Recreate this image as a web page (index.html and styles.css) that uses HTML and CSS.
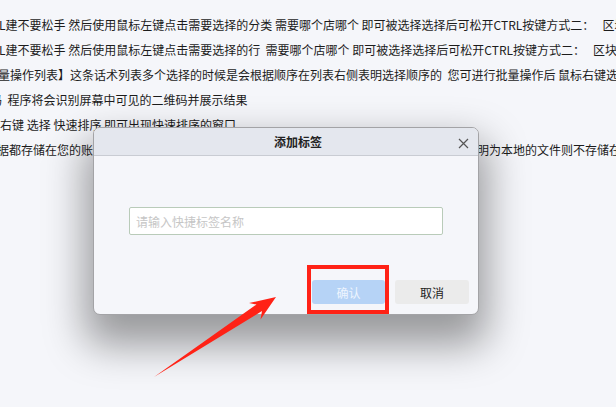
FILE: index.html
```html
<!DOCTYPE html>
<html>

<head>
  <title>添加标签</title>
  <meta charset="utf-8" />
  <link rel="stylesheet" href="styles.css">
</head>

<body>
  <!-- page text behind the dialog -->
  <div class="page">
    <div class="line l1">L建不要松手 然后使用鼠标左键点击需要选择的分类 需要哪个店哪个 即可被选择选择后可松开CTRL按键方式二：&nbsp;&nbsp; 区域选择</div>
    <div class="line l2">L建不要松手 然后使用鼠标左键点击需要选择的行&nbsp; 需要哪个店哪个 即可被选择选择后可松开CTRL按键方式二：&nbsp;&nbsp; 区块选择</div>
    <div class="line l3">量操作列表】这条话术列表多个选择的时候是会根据顺序在列表右侧表明选择顺序的&nbsp; 您可进行批量操作后 鼠标右键选择</div>
    <div class="line l4">码&nbsp;&nbsp;程序将会识别屏幕中可见的二维码并展示结果</div>
    <div class="line l5">右键 选择 快速排序 即可出现快速排序的窗口</div>
    <div class="line l6">据都存储在您的账户中，登录后可在任意设备上同步使用，若话术分组名称后面有标注的标明为本地的文件则不存储在云端</div>
  </div>

  <!-- dialog -->
  <div class="dialog">
    <div class="dialog-head">
      <span class="dialog-title">添加标签</span>
      <svg class="dialog-close" width="11" height="11" viewBox="0 0 11 11">
        <path d="M1 1 L10 10 M10 1 L1 10" stroke="#555" stroke-width="1.2" fill="none" />
      </svg>
    </div>
    <div class="dialog-body">
      <input class="tag-input" type="text" placeholder="请输入快捷标签名称">
    </div>
    <div class="dialog-foot">
      <button class="btn btn-ok">确认</button>
      <button class="btn btn-cancel">取消</button>
    </div>
  </div>

  <!-- annotation -->
  <div class="mark"></div>
  <svg class="arrow" width="616" height="407" viewBox="0 0 616 407">
    <polygon points="154,377 262,311 260.5,319.5 276,297 249,303 256.5,304.5" fill="#ff2216" />
  </svg>
</body>
</html>
```

FILE: styles.css
```css
* {
  margin: 0px;
  padding: 0px;
  box-sizing: border-box;
}

body {
  width: 616px;
  height: 407px;
  overflow: hidden;
  position: relative;
  background: #f5f6fa;
  font-family: "Noto Sans CJK SC", "Microsoft YaHei", sans-serif;
  font-size: 12px;
  color: #1c1c1c;
}

.page {
  padding-top: 12px;
}

.line {
  height: 25px;
  line-height: 25px;
  white-space: nowrap;
}

.l1,
.l2 { margin-left: -1px; }
.l3 { margin-left: -2px; }
.l4 { margin-left: -10px; }
.l6 { margin-left: -3px; }

/* dialog */
.dialog {
  position: absolute;
  left: 93px;
  top: 127px;
  width: 386px;
  height: 188px;
  border: 1px solid #a3a3a6;
  border-radius: 7px;
  background: #f5f6fa;
  overflow: hidden;
  box-shadow: 0 22px 40px 8px rgba(0, 0, 0, 0.38);
}

.dialog-head {
  height: 28px;
  background: #e4e7ee;
  border-bottom: 1px solid #c9ccd3;
  display: flex;
  align-items: center;
  justify-content: center;
  padding-left: 24px;
  position: relative;
}

.dialog-title {
  font-weight: bold;
  font-size: 12px;
  color: #222;
}

.dialog-close {
  position: absolute;
  right: 9px;
  top: 10px;
}

.dialog-body {
  padding: 51px 35px 0 35px;
}

.tag-input {
  display: block;
  width: 100%;
  height: 28px;
  border: 1px solid #b9cbb9;
  border-radius: 2px;
  background: #fff;
  padding: 0 6px;
  font-family: inherit;
  font-size: 12px;
  outline: none;
}

.tag-input::placeholder {
  color: #c6c6c6;
}

.dialog-foot {
  display: flex;
  justify-content: flex-end;
  gap: 10px;
  padding-right: 9px;
  margin-top: 45px;
}

.btn {
  width: 74px;
  height: 24px;
  border: none;
  border-radius: 3px;
  font-family: inherit;
  font-size: 12px;
}

.btn-ok {
  width: 73px;
  background: #b6d3f6;
  color: #eef5fe;
}

.btn-cancel {
  background: #ebebeb;
  color: #222;
}

/* annotation */
.mark {
  position: absolute;
  left: 307px;
  top: 265px;
  width: 82px;
  height: 49px;
  border: 4px solid #ff2216;
}

.arrow {
  position: absolute;
  left: 0;
  top: 0;
  pointer-events: none;
}
```
